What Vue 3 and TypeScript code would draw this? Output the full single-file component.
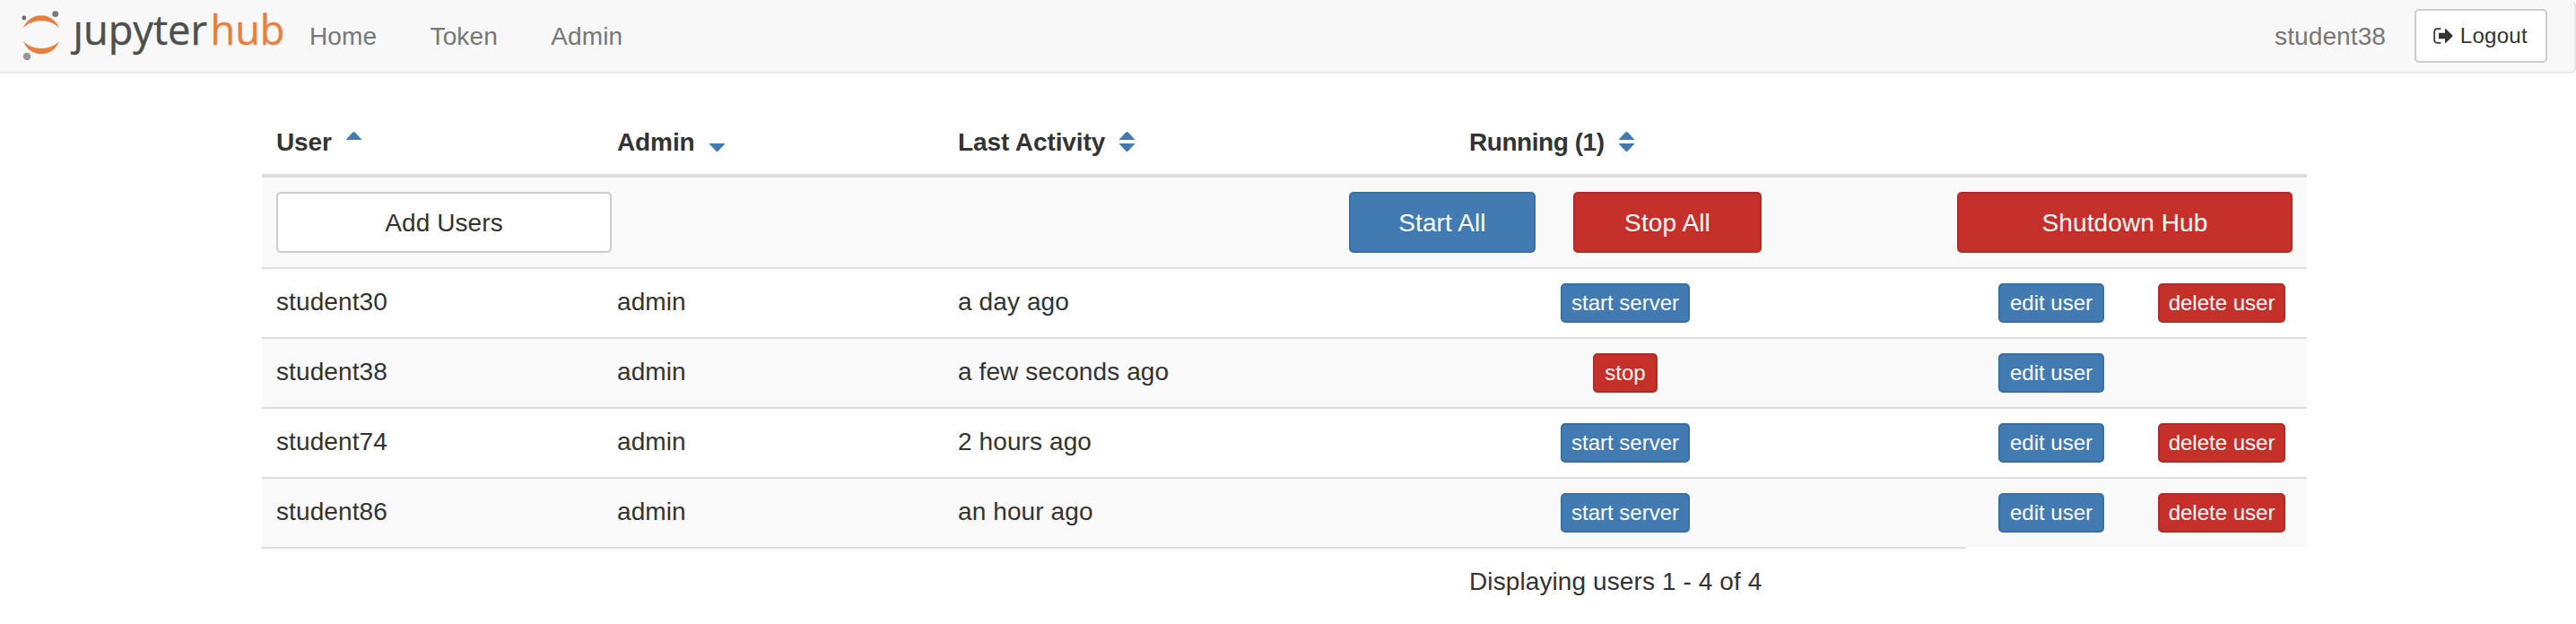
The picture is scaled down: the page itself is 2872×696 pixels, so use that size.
<script setup lang="ts">
interface HubUser {
  name: string
  activity: string
  running: boolean
  current?: boolean
}

interface Column {
  label: string
  sort: 'asc' | 'desc' | 'none'
}

const links: string[] = ['Home', 'Token', 'Admin']

const columns: Column[] = [
  { label: 'User', sort: 'asc' },
  { label: 'Admin', sort: 'desc' },
  { label: 'Last Activity', sort: 'none' },
  { label: 'Running (1)', sort: 'none' },
]

const users: HubUser[] = [
  { name: 'student30', activity: 'a day ago', running: false },
  { name: 'student38', activity: 'a few seconds ago', running: true, current: true },
  { name: 'student74', activity: '2 hours ago', running: false },
  { name: 'student86', activity: 'an hour ago', running: false },
]
</script>

<template>
  <div class="page">
    <nav class="navbar">
      <svg class="logo" width="345" height="80" viewBox="0 0 345 80" aria-label="jupyterhub">
        <path class="orange" d="M26 31 C33 12.5 59 12.5 66 31 C56 20.5 36 20.5 26 31Z" />
        <path class="orange" d="M26 46 C33 65 59 65 66 46 C56 56.5 36 56.5 26 46Z" />
        <circle cx="61.7" cy="15.6" r="3.4" fill="#767677" />
        <circle cx="26.8" cy="20" r="2.4" fill="#6b6b6b" />
        <circle cx="30" cy="63" r="4.2" fill="#989798" />
        <text class="word grey" x="81.5" y="50" textLength="149.5" lengthAdjust="spacingAndGlyphs">ȷupyter</text>
        <text class="word orange" x="234.5" y="50" textLength="83" lengthAdjust="spacingAndGlyphs">hub</text>
      </svg>
      <a v-for="link in links" :key="link" class="link">{{ link }}</a>
      <div class="account">
        <span class="name">student38</span>
        <button class="btn medium plain">
          <svg class="signout" width="22" height="18" viewBox="0 0 22 18">
            <path d="M8.3 1.2H4.6Q1.1 1.2 1.1 4.7V13.3Q1.1 16.8 4.6 16.8H8.3" fill="none" stroke="#333" stroke-width="1.7" />
            <path d="M6 5.7H13V1.8Q13 .5 14 1.3L21.2 8.3Q21.8 9 21.2 9.7L14 16.7Q13 17.5 13 16.2V12.3H6Z" fill="#333" />
          </svg>
          <span>Logout</span>
        </button>
      </div>
    </nav>

    <main class="table">
      <div class="row head">
        <div v-for="col in columns" :key="col.label" class="cell heading">
          <span>{{ col.label }}</span>
          <svg class="sort" width="17" height="22" viewBox="0 0 17 22">
            <path v-if="col.sort !== 'desc'" d="M0 9V8.3L7.3.6Q8.5-.4 9.7.6L17 8.3V9Z" />
            <path v-if="col.sort !== 'asc'" d="M0 13V13.7L7.3 21.4Q8.5 22.4 9.7 21.4L17 13.7V13Z" />
          </svg>
        </div>
      </div>

      <div class="actions">
        <button class="btn large plain wide">Add Users</button>
        <div class="bulk">
          <button class="btn large blue start-all">Start All</button>
          <button class="btn large red stop-all">Stop All</button>
        </div>
        <button class="btn large red wide">Shutdown Hub</button>
      </div>

      <div v-for="user in users" :key="user.name" class="row user">
        <div class="cell">{{ user.name }}</div>
        <div class="cell">admin</div>
        <div class="cell">{{ user.activity }}</div>
        <div class="cell center">
          <button v-if="user.running" class="btn small red stop">stop</button>
          <button v-else class="btn small blue start">start server</button>
        </div>
        <div class="cell"></div>
        <div class="cell center"><button class="btn small blue edit">edit user</button></div>
        <div class="cell center">
          <button v-if="!user.current" class="btn small red delete">delete user</button>
        </div>
      </div>

      <div class="foot">Displaying users 1 - 4 of 4</div>
    </main>
  </div>
</template>

<style>
body {
  margin: 0;
  background: #fff;
}
</style>

<style scoped>
.page {
  height: 696px;
  overflow: hidden;
  font-family: "Liberation Sans", Arial, sans-serif;
  font-size: 28px;
  line-height: 40px;
  letter-spacing: 0.1px;
  color: #333;
}

.page * {
  box-sizing: border-box;
}

.navbar {
  display: flex;
  height: 82px;
  background: #f8f8f8;
  border-right: 2px solid #e7e7e7;
  border-bottom: 2px solid #e7e7e7;
  border-radius: 0 6px 6px 0;
  color: #777;
}

.logo {
  flex: none;
}

.word {
  font-family: "Open Sans", "Noto Sans", sans-serif;
  font-size: 45px;
  letter-spacing: 0;
  stroke-width: 0.4px;
}

.grey {
  fill: #4e4e4e;
}

.orange {
  fill: #e77f3e;
}

.word.grey {
  stroke: #4e4e4e;
}

.word.orange {
  stroke: #e77f3e;
}

.link {
  padding: 21px 59.5px 19px 0;
}

.account {
  display: flex;
  align-items: center;
  gap: 32px;
  margin-left: auto;
  padding-right: 30px;
}

.name {
  padding-top: 2px;
}

.btn {
  display: block;
  margin: 0;
  border: 2px solid;
  border-radius: 5px;
  font-family: inherit;
  letter-spacing: inherit;
  white-space: nowrap;
}

.plain {
  background: #fff;
  border-color: #ccc;
  color: #333;
}

.blue {
  background: #427bb2;
  border-color: #386fa3;
  color: #fff;
}

.red {
  background: #c5302a;
  border-color: #af2c26;
  color: #fff;
}

.large {
  padding: 13px 24px 11px;
  font-size: 28px;
  line-height: 40px;
}

.medium {
  display: flex;
  align-items: center;
  justify-content: space-between;
  width: 148px;
  padding: 10px 20px;
  font-size: 24px;
  line-height: 36px;
  letter-spacing: 0.3px;
}

.small {
  padding: 2px 0;
  font-size: 24px;
  line-height: 36px;
  letter-spacing: 0;
}

.start {
  width: 144px;
}

.stop {
  width: 72px;
}

.edit {
  width: 118px;
}

.delete {
  width: 142px;
}

.signout {
  margin-left: -1px;
}

.table {
  width: 2280px;
  margin: 40px 0 0 292px;
}

.row {
  display: grid;
  grid-template-columns: 380px 380px 570px 380px 190px 190px 190px;
}

.head {
  height: 76px;
  border-bottom: 4px solid #ddd;
  font-weight: bold;
}

.cell {
  padding: 17px 16px 15px;
}

.cell.center {
  display: flex;
  justify-content: center;
  padding: 16px;
}

.heading {
  display: flex;
  gap: 16px;
  letter-spacing: -0.1px;
}

.heading:last-child {
  letter-spacing: -0.45px;
}

.sort {
  margin-top: 8px;
  fill: #427bb2;
}

.actions {
  display: flex;
  justify-content: space-between;
  height: 100px;
  padding: 16px;
  background: #f9f9f9;
}

.wide {
  width: 374px;
}

.bulk {
  display: flex;
  gap: 42px;
  margin-left: auto;
  margin-right: 218px;
}

.start-all {
  width: 208px;
}

.stop-all {
  width: 210px;
}

.user {
  height: 78px;
  border-top: 2px solid #ddd;
}

.user:nth-child(even) {
  background: #f9f9f9;
}

.foot {
  width: 1900px;
  padding: 17px 16px 15px 1346px;
  border-top: 2px solid #ddd;
}
</style>
